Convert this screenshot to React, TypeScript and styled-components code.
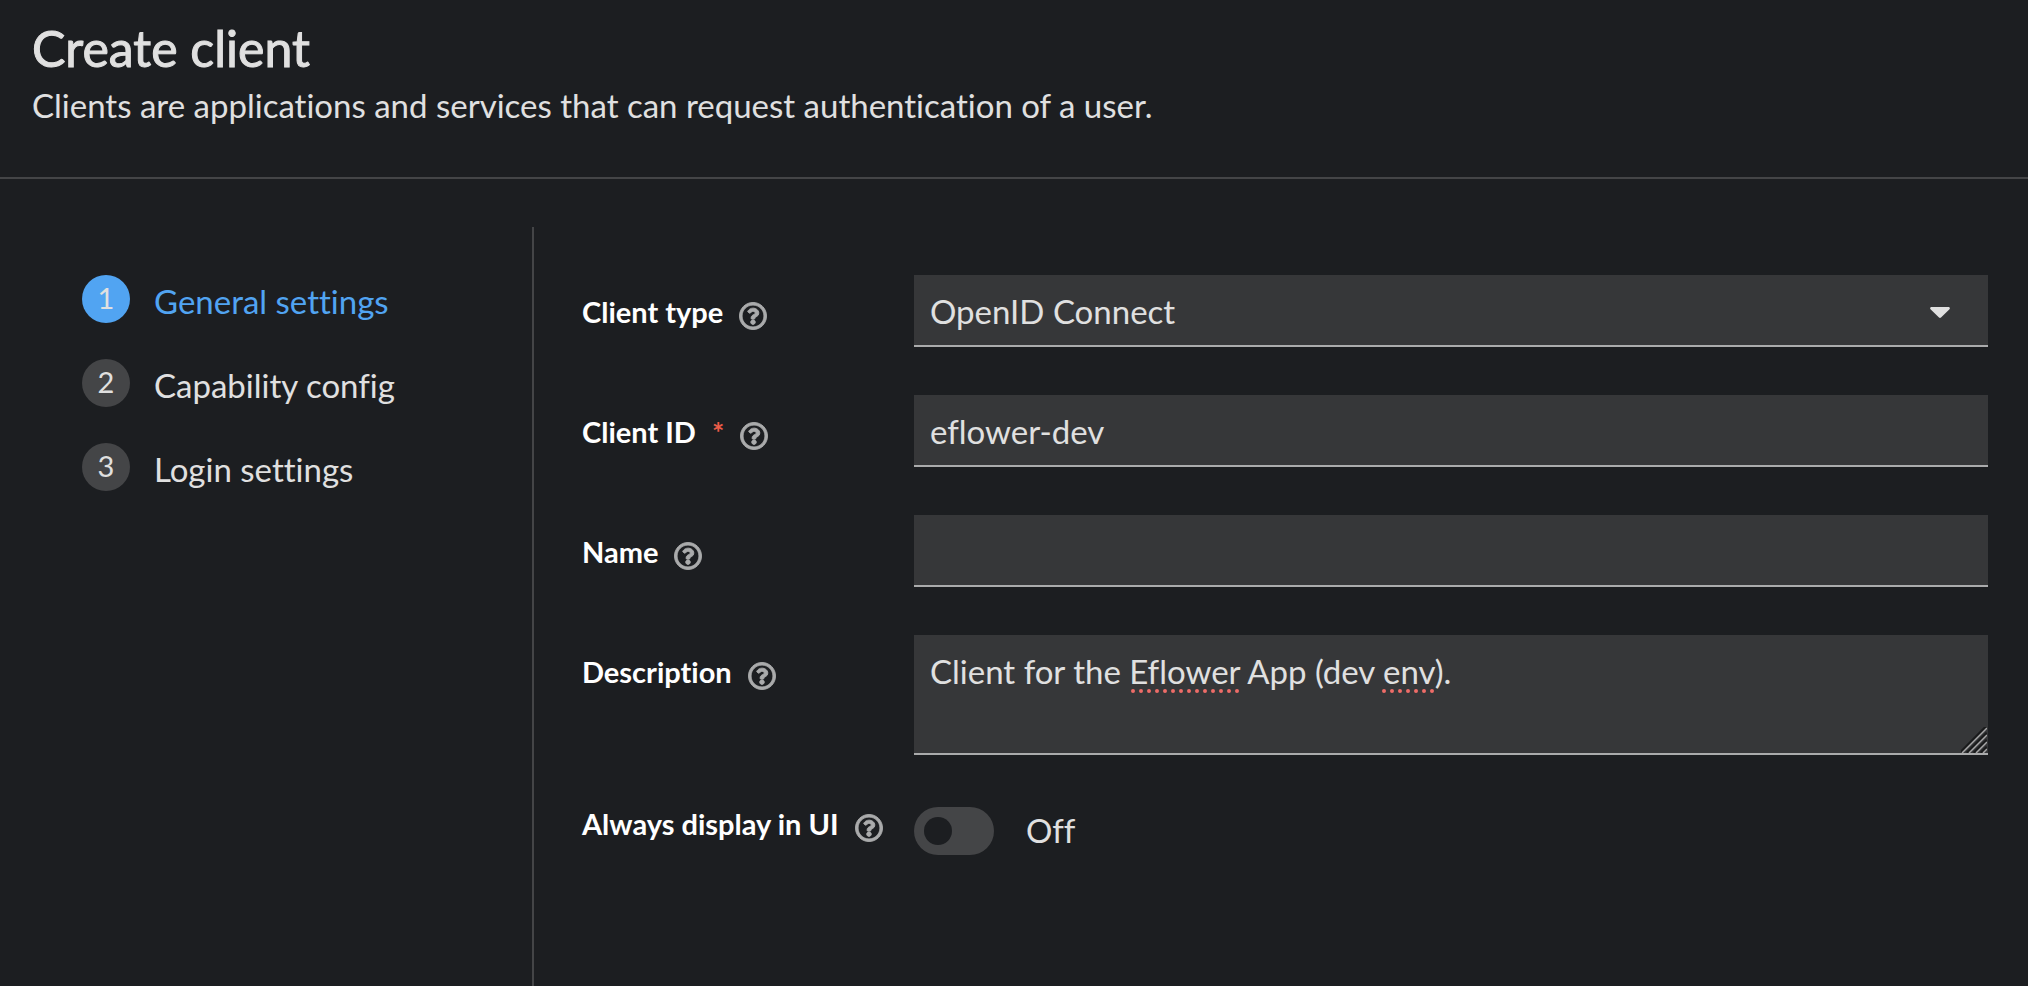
import React, { useState } from 'react';
import styled, { createGlobalStyle } from 'styled-components';
import { FaRegQuestionCircle } from 'react-icons/fa';

const color = {
  page: '#1c1e21',
  field: '#363739',
  line: '#444547',
  fieldLine: '#aaabac',
  text: '#e0e0e0',
  label: '#ffffff',
  accent: '#51a4f2',
  danger: '#ec5c48',
  misspelt: '#ee6c68',
};

const GlobalStyle = createGlobalStyle`
  *, *::before, *::after { box-sizing: border-box; }
  body {
    margin: 0;
    background: ${color.page};
    color: ${color.text};
    font-family: Lato, "Liberation Sans", sans-serif;
    font-size: 33px;
    line-height: 48px;
    font-variant-ligatures: no-common-ligatures;
  }
  button, input, select, textarea { font: inherit; font-variant-ligatures: inherit; color: inherit; }
`;

const Page = styled.div`
  display: flex;
  flex-direction: column;
  min-height: 100vh;
`;

const Header = styled.header`
  display: flex;
  flex-direction: column;
  gap: 4px;
  padding: 20px 32px 47px;
  border-bottom: 2px solid ${color.line};
`;

const Title = styled.h1`
  margin: 0;
  font-size: 50px;
  line-height: 56px;
  font-weight: 400;
  -webkit-text-stroke: 1px currentColor;
`;

const Subtitle = styled.p`
  margin: 0;
  line-height: 50px;
`;

const Wizard = styled.main`
  display: flex;
  flex: 1;
  padding-top: 48px;
`;

const Steps = styled.nav`
  flex: 0 0 534px;
  padding: 48px 32px 48px 82px;
  border-right: 2px solid ${color.line};
`;

const StepList = styled.ol`
  display: flex;
  flex-direction: column;
  gap: 32px;
  margin: 0;
  padding: 0;
  list-style: none;
`;

const StepButton = styled.button<{ $current: boolean }>`
  display: flex;
  align-items: flex-start;
  gap: 24px;
  padding: 0;
  border: 0;
  background: none;
  line-height: 52px;
  text-align: left;
  cursor: pointer;
  color: ${(p) => (p.$current ? color.accent : color.text)};
`;

const StepNumber = styled.span<{ $current: boolean }>`
  width: 48px;
  height: 48px;
  border-radius: 50%;
  background: ${(p) => (p.$current ? color.accent : color.line)};
  color: ${color.text};
  font-size: 29px;
  line-height: 46px;
  text-align: center;
`;

const Form = styled.form`
  display: flex;
  flex: 1;
  flex-direction: column;
  gap: 48px;
  min-width: 0;
  padding: 48px 40px 48px 48px;
`;

const Row = styled.div`
  display: grid;
  grid-template-columns: 300px minmax(0, 1fr);
  column-gap: 32px;
`;

const LabelCell = styled.div<{ $field?: boolean }>`
  display: flex;
  align-items: flex-start;
  gap: 16px;
  padding-top: ${(p) => (p.$field ? '16px' : '0')};
  line-height: 42px;
  white-space: nowrap;
`;

const Label = styled.label`
  display: flex;
  gap: 16px;
  color: ${color.label};
  font-size: 29px;
  font-weight: 700;
`;

const Required = styled.span`
  color: ${color.danger};
`;

const HelpButton = styled.button`
  display: flex;
  margin-top: 11px;
  padding: 0;
  border: 0;
  background: none;
  color: ${color.fieldLine};
  font-size: 28px;
  cursor: pointer;

  svg {
    stroke-width: 16;
  }
`;

const FieldWrap = styled.div`
  position: relative;
  display: flex;
`;

const Control = styled.input`
  display: block;
  width: 100%;
  padding: 12px 16px 10px;
  border: 0;
  border-bottom: 2px solid ${color.fieldLine};
  border-radius: 0;
  outline: 0;
  background: ${color.field};
  appearance: none;
  height: 72px;
`;

const TextArea = styled(Control)`
  height: 120px;
  resize: none;
`;

const Caret = styled.svg`
  position: absolute;
  top: 32px;
  right: 38px;
  fill: ${color.text};
  pointer-events: none;
`;

const SpellMarks = styled.svg`
  position: absolute;
  top: 53px;
  left: 16px;
  fill: none;
  stroke: ${color.misspelt};
  stroke-width: 4;
  stroke-linecap: round;
  stroke-dasharray: 0 8;
  pointer-events: none;
`;

const ResizeHandle = styled.svg`
  position: absolute;
  right: 1px;
  bottom: 2px;
  fill: none;
  pointer-events: none;
`;

const SwitchLine = styled.div`
  display: flex;
  gap: 32px;
  padding-top: 4px;
  line-height: 46px;
`;

const Switch = styled.input`
  width: 80px;
  height: 48px;
  margin: 0;
  padding: 10px;
  border-radius: 24px;
  background: ${(p) => (p.checked ? color.accent : color.line)};
  appearance: none;
  cursor: pointer;

  &::before {
    content: '';
    display: block;
    width: 28px;
    height: 28px;
    margin-left: ${(p) => (p.checked ? '32px' : '0')};
    border-radius: 50%;
    background: ${color.page};
  }
`;

const steps = ['General settings', 'Capability config', 'Login settings'];

interface FieldLabelProps {
  id: string;
  text: string;
  required?: boolean;
  field?: boolean;
}

function FieldLabel({ id, text, required, field = true }: FieldLabelProps) {
  return (
    <LabelCell $field={field}>
      <Label htmlFor={id}>
        {text}
        {required && <Required aria-hidden="true">*</Required>}
      </Label>
      <HelpButton type="button" aria-label={`Help for ${text}`}>
        <FaRegQuestionCircle />
      </HelpButton>
    </LabelCell>
  );
}

export default function App() {
  const [step, setStep] = useState(0);
  const [clientId, setClientId] = useState('eflower-dev');
  const [name, setName] = useState('');
  const [description, setDescription] = useState('Client for the Eflower App (dev env).');
  const [always, setAlways] = useState(false);

  return (
    <Page>
      <GlobalStyle />
      <Header>
        <Title>Create client</Title>
        <Subtitle>Clients are applications and services that can request authentication of a user.</Subtitle>
      </Header>
      <Wizard>
        <Steps aria-label="Create client steps">
          <StepList>
            {steps.map((label, i) => (
              <li key={label}>
                <StepButton
                  type="button"
                  $current={i === step}
                  aria-current={i === step ? 'step' : undefined}
                  onClick={() => setStep(i)}
                >
                  <StepNumber $current={i === step}>{i + 1}</StepNumber>
                  {label}
                </StepButton>
              </li>
            ))}
          </StepList>
        </Steps>
        <Form>
          <Row>
            <FieldLabel id="client-type" text="Client type" />
            <FieldWrap>
              <Control as="select" id="client-type" defaultValue="openid-connect">
                <option value="openid-connect">OpenID Connect</option>
                <option value="saml">SAML</option>
              </Control>
              <Caret width="20" height="12" viewBox="0 0 20 12" aria-hidden="true">
                <path d="M1.5 0h17c1.2 0 1.8 1.4 1 2.2l-8.5 8.3c-.6.6-1.4.6-2 0L.5 2.2C-.3 1.4.3 0 1.5 0z" />
              </Caret>
            </FieldWrap>
          </Row>
          <Row>
            <FieldLabel id="client-id" text="Client ID" required />
            <Control id="client-id" type="text" required value={clientId} onChange={(e) => setClientId(e.target.value)} />
          </Row>
          <Row>
            <FieldLabel id="client-name" text="Name" />
            <Control id="client-name" type="text" value={name} onChange={(e) => setName(e.target.value)} />
          </Row>
          <Row>
            <FieldLabel id="client-description" text="Description" />
            <FieldWrap>
              <TextArea
                as="textarea"
                id="client-description"
                spellCheck={false}
                value={description}
                onChange={(e) => setDescription(e.target.value)}
              />
              <SpellMarks width="520" height="6" viewBox="0 0 520 6" aria-hidden="true">
                <path d="M203 3H308" />
                <path d="M454 3H503" />
              </SpellMarks>
              <ResizeHandle width="26" height="26" viewBox="0 0 26 26" aria-hidden="true">
                <path d="M-1 26L26 -1M6 26L26 6M13 26L26 13M20 26L26 20" stroke="#1a1b1c" strokeWidth="3" />
                <path d="M1 26L26 1M8 26L26 8M15 26L26 15M22 26L26 22" stroke="#a6a6a7" strokeWidth="1.5" />
              </ResizeHandle>
            </FieldWrap>
          </Row>
          <Row>
            <FieldLabel id="always-display" text="Always display in UI" field={false} />
            <SwitchLine>
              <Switch
                id="always-display"
                type="checkbox"
                role="switch"
                checked={always}
                onChange={(e) => setAlways(e.target.checked)}
              />
              <span>{always ? 'On' : 'Off'}</span>
            </SwitchLine>
          </Row>
        </Form>
      </Wizard>
    </Page>
  );
}
